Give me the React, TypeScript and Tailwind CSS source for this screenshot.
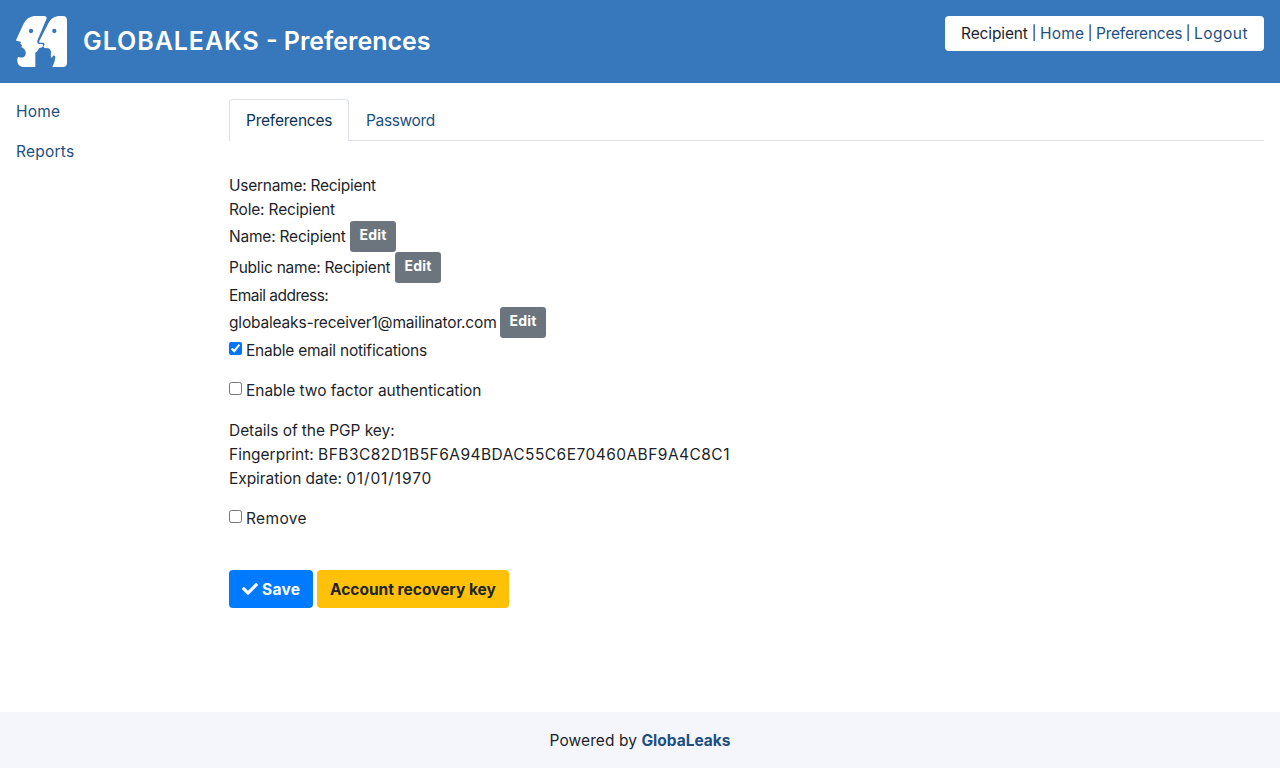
import React from 'react';

function Logo() {
  return (
    <svg viewBox="0 0 153 153" className="block h-[51px] w-[51px] shrink-0" aria-hidden="true">
      <path
        fill="#fff"
        d="M54 0H84Q95 1 91 10L65 71Q61 81 68 84H80L81 91Q78 96 69 97Q66 106 58 110V153H27Q11 153 6 143Q1 130 7 122Q14 126 22 124Q31 119 29 108Q27 98 16 94L18 87L13 83L15 77L2 75Q-1 73 2 68L22 25Q32 3 54 0Z"
      />
      <path
        fill="#fff"
        d="M128 0H140Q153 0 153 13V140Q153 153 140 153H109Q117 138 118 124Q117 116 111 119L107 127Q103 120 105 110Q105 99 97 97L85 96L82 91L86 86L84 80H71Q68 79 70 75L97 22Q106 2 128 0Z"
      />
      <circle cx="45" cy="45" r="6.5" fill="#3777bc" />
      <circle cx="115" cy="45" r="6.5" fill="#3777bc" />
    </svg>
  );
}

type TextProps = { w: string; children: React.ReactNode };

function Text({ w, children }: TextProps) {
  return <span className={`inline-block whitespace-nowrap ${w}`}>{children}</span>;
}

function Edit() {
  return (
    <button className="ml-1 h-[31px] w-[46px] shrink-0 rounded-[3.2px] bg-[#6c757d] pb-[4px] text-center text-[14px] leading-[21px] font-bold tracking-[0.2px] text-white">
      Edit
    </button>
  );
}

function Check({ checked = false }: { checked?: boolean }) {
  return <input type="checkbox" defaultChecked={checked} className="mr-1 mb-[3px] h-[13px] w-[13px] shrink-0 accent-[#0075ff]" />;
}

export default function App() {
  return (
    <div className="flex h-screen flex-col bg-white font-['Inter',sans-serif] text-[15.5px] leading-6 text-[#1d1f2a]">
      <header className="flex h-[83px] shrink-0 items-start justify-between bg-[#3777bc] p-4">
        <div className="flex items-center gap-4">
          <Logo />
          <h1 className="pb-[2px] text-[25px] leading-[30px] font-semibold whitespace-nowrap text-white">
            <span className="tracking-[0.95px]">GLOBALEAKS</span> - Preferences
          </h1>
        </div>
        <nav className="flex h-[35px] w-[319px] rounded-[4px] bg-white px-4 pt-[5px] whitespace-nowrap text-[#1d4f81]">
          <Text w="w-[67px] pt-px tracking-[-0.12px] text-[#1d1f2a]">Recipient</Text>
          <span className="w-3 text-center text-[14px] text-[#1d1f2a]">|</span>
          <Text w="w-[44px] pt-px tracking-[0.2px]">Home</Text>
          <span className="w-3 text-center text-[14px] text-[#1d1f2a]">|</span>
          <Text w="w-[86px] pt-px tracking-[-0.22px]">Preferences</Text>
          <span className="w-3 text-center text-[14px] text-[#1d1f2a]">|</span>
          <Text w="w-[54px] pt-px tracking-[0.5px]">Logout</Text>
        </nav>
      </header>
      <div className="flex min-h-0 flex-1 px-4">
        <aside className="flex w-[213px] shrink-0 flex-col gap-4 pt-[17px] tracking-[0.22px] text-[#1d4f81]">
          <a>Home</a>
          <a>Reports</a>
        </aside>
        <main className="flex-1 pt-4">
          <div className="flex h-[42px] border-b border-[#dee2e6]">
            <div className="h-[42px] w-[120px] rounded-t-[4px] border border-b-0 border-[#dee2e6] bg-white px-4 pt-[9px] tracking-[-0.22px] whitespace-nowrap text-[#0d3355]">Preferences</div>
            <div className="px-[17px] pt-[10px] tracking-[-0.36px] text-[#1d4f81]">Password</div>
          </div>
          <div className="flex flex-col pt-8">
            <div className="h-6 pt-px tracking-[-0.27px]">Username: Recipient</div>
            <div className="h-6 pt-px tracking-[-0.18px]">Role: Recipient</div>
            <div className="flex h-[31px] items-center"><Text w="w-[117px] tracking-[-0.21px]">Name: Recipient</Text><Edit /></div>
            <div className="flex h-[31px] items-center"><Text w="w-[162px] tracking-[-0.23px]">Public name: Recipient</Text><Edit /></div>
            <div className="h-6 pt-px tracking-[-0.52px]">Email address:</div>
            <div className="flex h-[31px] items-center"><Text w="w-[267px] tracking-[-0.18px]">globaleaks-receiver1@mailinator.com</Text><Edit /></div>
            <label className="flex h-6 items-center">
              <Check checked />
              <span className="pt-[2px] tracking-[-0.23px]">Enable email notifications</span>
            </label>
            <label className="mt-4 flex h-6 items-center">
              <Check />
              <span className="pt-[2px] tracking-[-0.04px]">Enable two factor authentication</span>
            </label>
            <div className="mt-4 h-6 pt-px tracking-[-0.06px]">Details of the PGP key:</div>
            <div className="h-6 pt-px">
              Fingerprint: <span className="tracking-[0.46px]">BFB3C82D1B5F6A94BDAC55C6E70460ABF9A4C8C1</span>
            </div>
            <div className="h-6 pt-px tracking-[-0.06px]">
              Expiration date: <span className="tracking-[0.88px]">01/01/1970</span>
            </div>
            <label className="mt-4 flex h-6 items-center">
              <Check />
              <span className="pt-[2px] tracking-[0.36px]">Remove</span>
            </label>
          </div>
          <div className="mt-10 flex gap-1 font-bold">
            <button className="flex h-[38px] w-[84px] items-center rounded-[4px] bg-[#007bff] pl-[13px] text-white">
              <svg viewBox="0 0 512 512" className="mr-1 h-4 w-4" fill="currentColor"><path d="M173.898 439.404l-166.4-166.4c-9.997-9.997-9.997-26.206 0-36.204l36.203-36.204c9.997-9.998 26.207-9.998 36.204 0L192 312.69 432.095 72.596c9.997-9.997 26.207-9.997 36.204 0l36.203 36.204c9.997 9.997 9.997 26.206 0 36.204l-294.4 294.401c-9.998 9.997-26.207 9.997-36.204-.001z" /></svg>
              <span className="pt-[2px] tracking-[0.25px]">Save</span>
            </button>
            <button className="h-[38px] w-[192px] rounded-[4px] bg-[#ffc107] pt-[2px] pl-[13px] text-left whitespace-nowrap text-[#212529]">Account recovery key</button>
          </div>
        </main>
      </div>
      <footer className="flex h-14 shrink-0 justify-center bg-[#f5f6fb] pt-[17px]">
        <div className="flex w-[181px] gap-1 whitespace-nowrap">
          <Text w="w-[88px] tracking-[0.1px]">Powered by</Text>
          <b className="text-[#1d4f81]">GlobaLeaks</b>
        </div>
      </footer>
    </div>
  );
}
